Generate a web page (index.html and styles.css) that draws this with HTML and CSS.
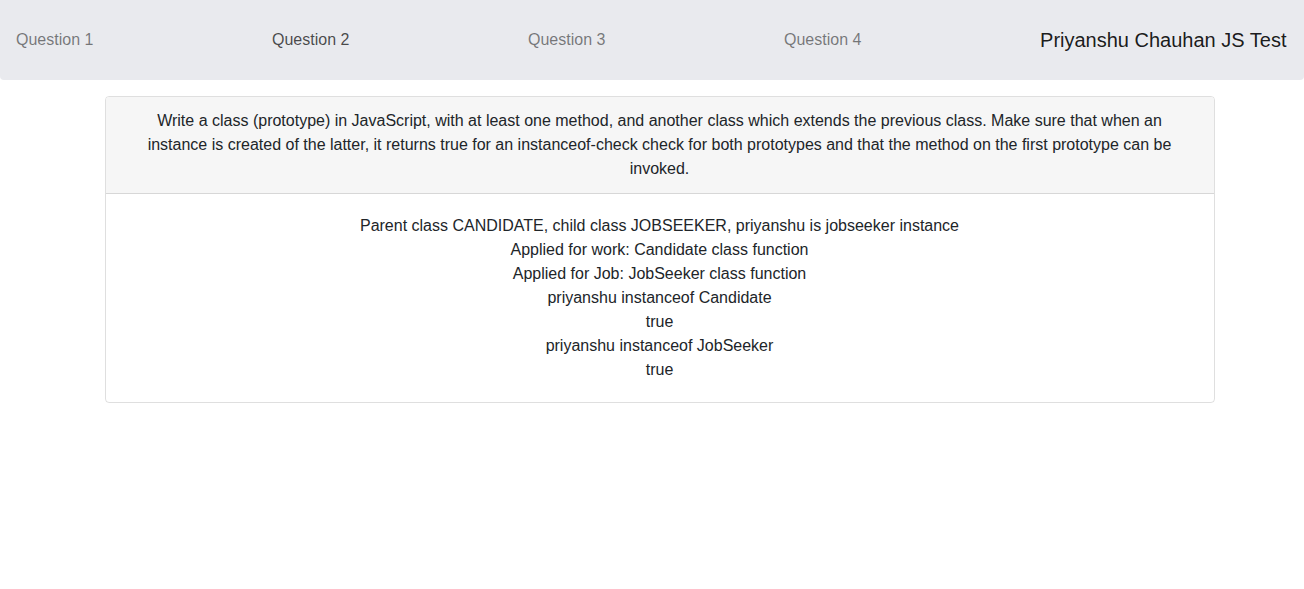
FILE: index.html
```html
<!DOCTYPE html>
<html>
<head>
<meta charset="utf-8">
<link rel="stylesheet" href="styles.css">
</head>
<body>
<nav class="navbar">
  <ul class="nav-list">
    <li class="nav-item"><a class="nav-link">Question 1</a></li>
    <li class="nav-item"><a class="nav-link active">Question 2</a></li>
    <li class="nav-item"><a class="nav-link">Question 3</a></li>
    <li class="nav-item"><a class="nav-link">Question 4</a></li>
  </ul>
  <span class="brand">Priyanshu Chauhan JS Test</span>
</nav>
<main class="container">
  <section class="card">
    <header class="card-header">Write a class (prototype) in JavaScript, with at least one method, and another class which extends the previous class. Make sure that when an instance is created of the latter, it returns true for an instanceof-check check for both prototypes and that the method on the first prototype can be invoked.</header>
    <div class="card-body">
      <div>Parent class CANDIDATE, child class JOBSEEKER, priyanshu is jobseeker instance</div>
      <div>Applied for work: Candidate class function</div>
      <div>Applied for Job: JobSeeker class function</div>
      <div>priyanshu instanceof Candidate</div>
      <div>true</div>
      <div>priyanshu instanceof JobSeeker</div>
      <div>true</div>
    </div>
  </section>
</main>
</body>
</html>
```
FILE: styles.css
```css
* { box-sizing: border-box; }
html, body { margin: 0; padding: 0; }
body {
  font-family: "Liberation Sans", Arial, sans-serif;
  font-size: 16px;
  line-height: 24px;
  color: #212529;
  background: #fff;
}
.navbar {
  height: 80px;
  background: #e9eaee;
  border-radius: 0 0 4px 4px;
  display: flex;
  align-items: center;
  justify-content: space-between;
  padding: 0 17.5px 0 16px;
}
.nav-list {
  list-style: none;
  margin: 0;
  padding: 0;
  display: flex;
}
.nav-item { width: 256px; }
.nav-link {
  color: rgba(0, 0, 0, 0.5);
  font-size: 16px;
  line-height: 24px;
}
.nav-link.active { color: rgba(0, 0, 0, 0.7); }
.brand {
  font-size: 20px;
  line-height: 30px;
  color: rgba(0, 0, 0, 0.9);
}
.container {
  width: 1110px;
  margin: 16px auto 0;
  position: relative;
  left: 8px;
}
.card {
  border: 1px solid rgba(0, 0, 0, 0.125);
  border-radius: 4px;
  overflow: hidden;
}
.card-header {
  background: #f6f6f6;
  border-bottom: 1px solid rgba(0, 0, 0, 0.125);
  padding: 12px 21px 12px 20px;
  text-align: center;
}
.card-body {
  padding: 20px 21px 20px 20px;
  text-align: center;
}
```
